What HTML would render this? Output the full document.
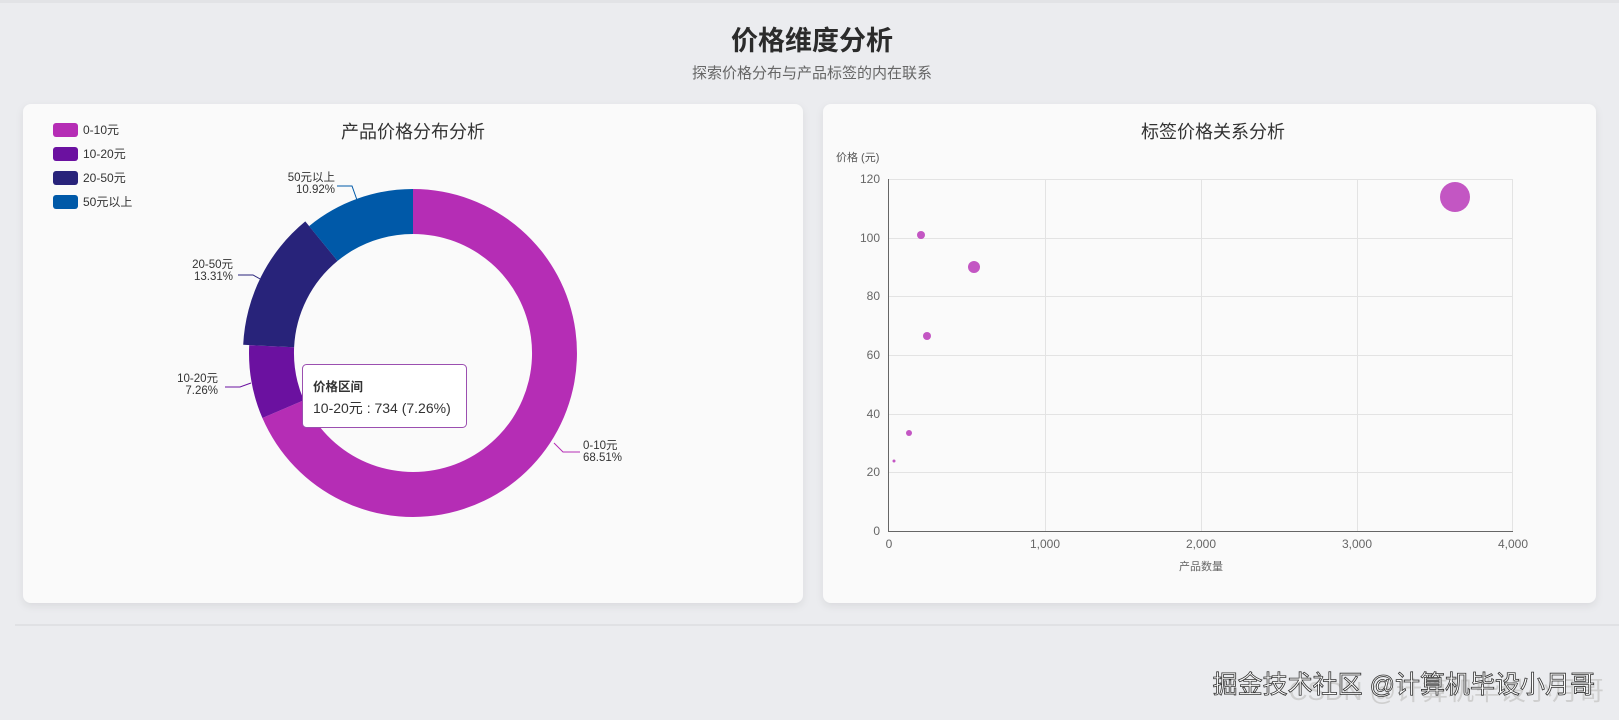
<!DOCTYPE html>
<html><head><meta charset="utf-8"><style>
html,body{margin:0;padding:0;width:1619px;height:720px;overflow:hidden;background:#ebecef;}
svg text{font-family:"Liberation Sans","Noto Sans CJK SC",sans-serif;}
</style></head><body>
<svg width="1619" height="720" viewBox="0 0 1619 720" xmlns="http://www.w3.org/2000/svg">
<defs><filter id="sh" x="-5%" y="-5%" width="110%" height="115%"><feDropShadow dx="0" dy="3" stdDeviation="4" flood-color="#000" flood-opacity="0.08"/></filter></defs>
<rect x="0" y="0" width="1619" height="3" fill="#e2e3e6"/>
<text x="812" y="50" text-anchor="middle" font-size="27" font-weight="bold" fill="#2b2b2b">价格维度分析</text>
<text x="812" y="78" text-anchor="middle" font-size="15" fill="#666">探索价格分布与产品标签的内在联系</text>
<rect x="23" y="104" width="780" height="499" rx="8" fill="#fafafa" filter="url(#sh)"/>
<rect x="823" y="104" width="773" height="499" rx="8" fill="#fafafa" filter="url(#sh)"/>
<rect x="15" y="624" width="1604" height="2" fill="#e0e1e4"/>
<!-- left card -->
<text x="413" y="138" text-anchor="middle" font-size="18" fill="#333">产品价格分布分析</text>
<g font-size="12" fill="#333">
<rect x="53" y="123" width="25" height="14" rx="3" fill="#b52db5"/><text x="83" y="134">0-10元</text>
<rect x="53" y="147" width="25" height="14" rx="3" fill="#6b11a0"/><text x="83" y="158">10-20元</text>
<rect x="53" y="171" width="25" height="14" rx="3" fill="#28237a"/><text x="83" y="182">20-50元</text>
<rect x="53" y="195" width="25" height="14" rx="3" fill="#0059a8"/><text x="83" y="206">50元以上</text>
</g>
<path d="M413,189 A164,164 0 1,1 262.4,418 L303.8,400.2 A119,119 0 1,0 413,234 Z" fill="#b52db5"/>
<path d="M262.4,418 A164,164 0 0,1 249.2,345.1 L294.1,347.3 A119,119 0 0,0 303.8,400.2 Z" fill="#6b11a0"/>
<path d="M243.2,344.8 A170,170 0 0,1 305.3,221.4 L337.6,260.9 A119,119 0 0,0 294.1,347.3 Z" fill="#28237a"/>
<path d="M309.1,226.1 A164,164 0 0,1 413,189 L413,234 A119,119 0 0,0 337.6,260.9 Z" fill="#0059a8"/>
<g fill="none" stroke-width="1">
<polyline points="554,443 563,452 580,452" stroke="#b52db5"/>
<polyline points="251,383 240,387 225,387" stroke="#6b11a0"/>
<polyline points="262,280 253,275 238,275" stroke="#28237a"/>
<polyline points="357,200 352,186 337,186" stroke="#0059a8"/>
</g>
<g font-size="11.5" fill="#333" text-anchor="end">
<text x="335" y="181">50元以上</text><text x="335" y="193">10.92%</text>
<text x="233" y="268">20-50元</text><text x="233" y="280">13.31%</text>
<text x="218" y="382">10-20元</text><text x="218" y="394">7.26%</text>
</g>
<g font-size="11.5" fill="#333"><text x="583" y="449">0-10元</text><text x="583" y="461">68.51%</text></g>
<rect x="302.5" y="364.5" width="164" height="63" rx="4" fill="#fff" stroke="#9b4fb0" stroke-width="1"/>
<text x="313" y="391" font-size="12.5" fill="#333" font-weight="bold">价格区间</text>
<text x="313" y="413" font-size="14" fill="#333">10-20元 : 734 (7.26%)</text>
<!-- right card -->
<text x="1213" y="138" text-anchor="middle" font-size="18" fill="#333">标签价格关系分析</text>
<text x="836" y="161" font-size="11" fill="#555">价格 (元)</text>
<g stroke="#e3e3e3" stroke-width="1">
<line x1="889" y1="179.5" x2="1513" y2="179.5"/><line x1="889" y1="238.5" x2="1513" y2="238.5"/>
<line x1="889" y1="296.5" x2="1513" y2="296.5"/><line x1="889" y1="355.5" x2="1513" y2="355.5"/>
<line x1="889" y1="414.5" x2="1513" y2="414.5"/><line x1="889" y1="472.5" x2="1513" y2="472.5"/>
<line x1="1045.5" y1="179" x2="1045.5" y2="531"/><line x1="1201.5" y1="179" x2="1201.5" y2="531"/>
<line x1="1357.5" y1="179" x2="1357.5" y2="531"/><line x1="1512.5" y1="179" x2="1512.5" y2="531"/>
</g>
<line x1="888.5" y1="179" x2="888.5" y2="531" stroke="#666"/>
<line x1="888" y1="531.5" x2="1513" y2="531.5" stroke="#666"/>
<g font-size="12" fill="#666" text-anchor="end">
<text x="880" y="183">120</text><text x="880" y="242">100</text><text x="880" y="300">80</text>
<text x="880" y="359">60</text><text x="880" y="418">40</text><text x="880" y="476">20</text><text x="880" y="535">0</text>
</g>
<g font-size="12" fill="#666" text-anchor="middle">
<text x="889" y="548">0</text><text x="1045" y="548">1,000</text><text x="1201" y="548">2,000</text>
<text x="1357" y="548">3,000</text><text x="1513" y="548">4,000</text>
<text x="1201" y="570" font-size="11">产品数量</text>
</g>
<g fill="#b52db5" fill-opacity="0.8">
<circle cx="1455" cy="197" r="15"/><circle cx="921" cy="235" r="4"/><circle cx="974" cy="267" r="6"/>
<circle cx="927" cy="336" r="4"/><circle cx="909" cy="433" r="3"/><circle cx="894" cy="461" r="1.5"/>
</g>
<text x="1604" y="700" text-anchor="end" font-size="26" fill="#cfcfcf">CSDN @计算机毕设小月哥</text>
<text x="1595" y="693" text-anchor="end" font-size="25" fill="#fff" stroke="#333" stroke-width="0.8">掘金技术社区 @计算机毕设小月哥</text>
</svg>
</body></html>
